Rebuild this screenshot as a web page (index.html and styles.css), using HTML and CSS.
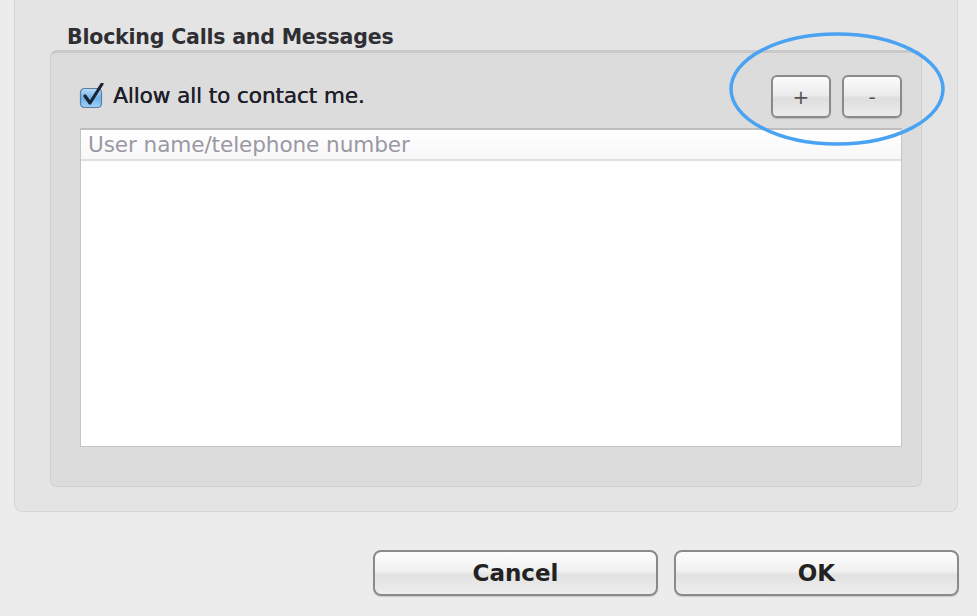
FILE: index.html
```html
<!DOCTYPE html>
<html>
<head>
<meta charset="utf-8">
<link rel="stylesheet" href="styles.css">
</head>
<body>
<div class="page">
  <div class="panel">
    <div class="group-title">Blocking Calls and Messages</div>
    <div class="group">
      <div class="top-row">
        <label class="check">
          <svg class="cb" width="26" height="26" viewBox="0 0 26 26">
            <defs>
              <linearGradient id="cbg" x1="0" y1="0" x2="0" y2="1">
                <stop offset="0" stop-color="#b9dcf7"/>
                <stop offset="0.5" stop-color="#6fb2ea"/>
                <stop offset="1" stop-color="#9fd0f6"/>
              </linearGradient>
            </defs>
            <rect x="1.5" y="5.5" width="21" height="19" rx="4" fill="url(#cbg)" stroke="#5a7da3" stroke-width="1.2"/>
            <path d="M6 13 L11 20 L23 1" fill="none" stroke="#1b2433" stroke-width="3.2" stroke-linecap="round" stroke-linejoin="round"/>
          </svg>
          <span>Allow all to contact me.</span>
        </label>
        <div class="pm">
          <button class="small-btn">+</button>
          <button class="small-btn">-</button>
        </div>
      </div>
      <div class="table">
        <div class="thead">User name/telephone number</div>
        <div class="tbody"></div>
      </div>
    </div>
  </div>
  <div class="actions">
    <button class="btn">Cancel</button>
    <button class="btn">OK</button>
  </div>
  <svg class="ring" width="220" height="118" viewBox="0 0 220 118">
    <ellipse cx="110" cy="59" rx="106" ry="55" fill="none" stroke="#4aa3f2" stroke-width="3.5"/>
  </svg>
</div>
</body>
</html>
```

FILE: styles.css
```css
html, body {
  margin: 0;
  padding: 0;
  background: #ececec;
}
body {
  font-family: "DejaVu Sans", "Liberation Sans", sans-serif;
  color: #222;
  width: 977px;
  height: 616px;
  overflow: hidden;
}
.page {
  position: relative;
  width: 977px;
  height: 616px;
}
.panel {
  margin-left: 14px;
  width: 944px;
  height: 512px;
  box-sizing: border-box;
  background: #e4e4e4;
  border: 1px solid #d6d6d6;
  border-top: none;
  border-radius: 0 0 8px 8px;
  padding: 25px 36px 0 35px;
}
.group-title {
  font-weight: bold;
  font-size: 20.5px;
  color: #2f2f33;
  padding-left: 17px;
  height: 25px;
  line-height: 25px;
  letter-spacing: -0.2px;
}
.group {
  width: 872px;
  height: 437px;
  box-sizing: border-box;
  background: #dcdcdc;
  border: 1px solid #d0d0d0;
  border-top: 3px solid #c9c9c9;
  border-radius: 7px;
  padding: 22px 19px 0 28px;
}
.top-row {
  display: flex;
  justify-content: space-between;
  align-items: center;
  height: 43px;
}
.check {
  display: flex;
  align-items: center;
  gap: 8px;
  font-size: 21.6px;
  color: #1e1e2a;
  margin-top: -2px;
}
.check span {
  letter-spacing: -0.1px;
  text-shadow: 0.4px 0 0 #1e1e2a;
}
.pm {
  display: flex;
  gap: 11px;
}
.small-btn {
  width: 60px;
  height: 43px;
  box-sizing: border-box;
  border: 2px solid #8a8a8a;
  border-radius: 6px;
  background: linear-gradient(#fbfbfb, #ececec 45%, #dedede 55%, #ececec);
  font-family: "DejaVu Sans", sans-serif;
  font-size: 20px;
  color: #555;
  padding: 0;
  box-shadow: 0 1px 1px rgba(0,0,0,0.15);
}
.table {
  margin-top: 10px;
  margin-left: 1px;
  width: 822px;
  height: 319px;
  box-sizing: border-box;
  background: #fff;
  border: 1px solid #c4c4c4;
  border-top: 2px solid #bdbdbd;
}
.thead {
  height: 31px;
  box-sizing: border-box;
  border-bottom: 2px solid #e0e0e0;
  background: linear-gradient(#ffffff, #f7f7f7);
  font-size: 21.6px;
  color: #9a98a4;
  line-height: 29px;
  padding-left: 7px;
  letter-spacing: -0.1px;
}
.actions {
  display: flex;
  justify-content: flex-end;
  gap: 16px;
  padding: 38px 18px 0 0;
}
.btn {
  width: 285px;
  height: 46px;
  box-sizing: border-box;
  border: 2px solid #8a8a8a;
  border-radius: 8px;
  background: linear-gradient(#fdfdfd, #f1f1f1 45%, #e2e2e2 55%, #ededed);
  font-family: "DejaVu Sans", sans-serif;
  font-weight: bold;
  font-size: 23px;
  color: #222;
  padding: 0;
  box-shadow: 0 1px 1px rgba(0,0,0,0.15);
}
.ring {
  position: absolute;
  left: 727px;
  top: 30px;
}
```
